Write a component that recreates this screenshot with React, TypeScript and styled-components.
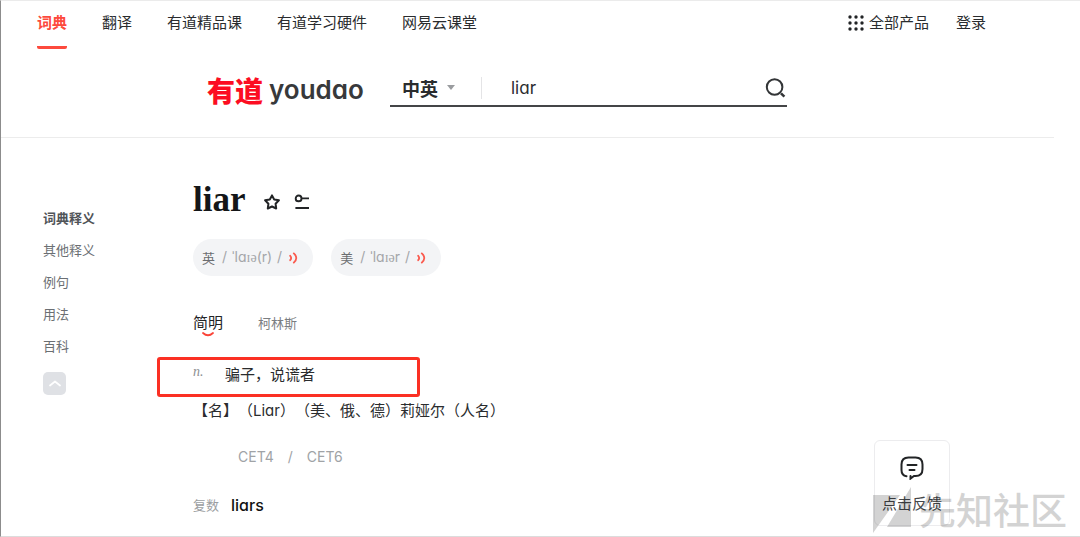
import React from "react";
import styled, { createGlobalStyle } from "styled-components";

const GlobalStyle = createGlobalStyle`
  *, *::before, *::after { box-sizing: border-box; }
  body {
    margin: 0;
    background: #fff;
    color: #2a2c2e;
    font-family: Inter, "Noto Sans CJK SC", sans-serif;
    font-feature-settings: "cv11";
    font-size: 15px;
    line-height: 22px;
    text-spacing-trim: space-all;
  }
  a { color: inherit; text-decoration: none; }
  button, input, select { font: inherit; font-feature-settings: inherit; color: inherit; border: 0; padding: 0; background: none; }
  button { cursor: pointer; }
`;

const Page = styled.div`
  position: relative;
  min-height: 100vh;
  border-left: 1px solid #8c8c8c;
  border-top: 1px solid #ebebeb;
  border-bottom: 1px solid #dcdcdc;
`;

const Header = styled.header`
  margin-right: 26px;
  padding: 11px 68px 30px 36px;
  border-bottom: 1px solid #ececec;
`;

const TopBar = styled.div`
  display: flex;
  justify-content: space-between;
  align-items: flex-start;
`;

const Nav = styled.nav`
  display: flex;
  gap: 35px;
`;

const NavLink = styled.a<{ $active?: boolean }>`
  height: 37px;
  color: ${(p) => (p.$active ? "#fd4a3d" : "#2a2c2e")};
  font-weight: ${(p) => (p.$active ? 700 : 400)};
  border-bottom: 3px solid ${(p) => (p.$active ? "#fd4a3d" : "transparent")};
  border-radius: 2px;
`;

const Account = styled.div`
  display: flex;
  gap: 27px;
`;

const AccountButton = styled.button`
  display: flex;
  align-items: center;
  gap: 5px;
`;

const SearchRow = styled.div`
  display: flex;
  align-items: center;
  gap: 28px;
  margin-top: 21px;
  padding-left: 170px;
`;

const Logo = styled.a`
  display: flex;
  align-items: center;
  gap: 6px;
  width: 155px;
  height: 37px;
  white-space: nowrap;
`;

const LogoMark = styled.span`
  padding-top: 2px;
  color: #fc0d22;
  font: 900 28px/38px "Noto Sans CJK SC", sans-serif;
`;

const LogoName = styled.span`
  padding-top: 2px;
  color: #38393b;
  font-size: 26px;
  font-weight: 600;
  line-height: 32px;
`;

const SearchBox = styled.form`
  display: flex;
  align-items: center;
  flex: 0 1 397px;
  min-width: 0;
  height: 37px;
  padding: 0 1px 0 12px;
  border-bottom: 2px solid #444547;
`;

const LanguageField = styled.div`
  display: flex;
  flex: none;
  align-items: center;
  gap: 8px;
  width: 79px;
`;

const LanguageSelect = styled.select`
  appearance: none;
  width: 37px;
  padding-top: 4px;
  font-size: 18px;
  font-weight: 700;
  line-height: 26px;
  outline: none;
`;

const SearchInput = styled.input`
  flex: 1;
  width: 0;
  min-width: 0;
  height: 22px;
  padding-left: 29px;
  border-left: 1px solid #e4e4e6;
  font-size: 17px;
  outline: none;
`;

const IconButton = styled.button`
  display: flex;
`;

const Main = styled.main`
  display: flex;
  padding-left: 42px;
`;

const Sidebar = styled.aside`
  display: flex;
  flex-direction: column;
  align-items: flex-start;
  width: 150px;
  padding-top: 64px;
`;

const SideLink = styled.a<{ $active?: boolean }>`
  color: ${(p) => (p.$active ? "#505458" : "#6b6f73")};
  font-size: 13px;
  font-weight: ${(p) => (p.$active ? 700 : 400)};
  line-height: 32px;
`;

const TopButton = styled.button`
  display: flex;
  align-items: center;
  justify-content: center;
  width: 23px;
  height: 23px;
  margin-top: 10px;
  border-radius: 5px;
  background: #dfe1e5;
`;

const Article = styled.article`
  flex: 1;
  padding-top: 42px;
`;

const WordLine = styled.div`
  display: flex;
  align-items: center;
  gap: 14px;
  height: 40px;
`;

const Word = styled.h1`
  margin: 0 5px 0 0;
  color: #141618;
  font: 700 35px/40px "Liberation Serif", serif;
`;

const WordTool = styled(IconButton)`
  padding-top: 4px;
`;

const Pronunciations = styled.div`
  display: flex;
  gap: 18px;
  margin-top: 19px;
`;

const Pill = styled.button`
  display: flex;
  align-items: center;
  gap: 7px;
  height: 37px;
  padding: 0 15px 0 9px;
  border-radius: 19px;
  background: #f3f4f6;
  color: #6b6d70;
  font-size: 13px;
`;

const Phonetic = styled.span`
  display: flex;
  gap: 5px;
  color: #a4a6a9;
  font-size: 14px;
`;

const Ipa = styled.span`
  font-family: "Liberation Serif", serif;
  font-size: 14px;
`;

const Tabs = styled.div`
  display: flex;
  gap: 35px;
  margin-top: 35px;
`;

const Tab = styled.button<{ $active?: boolean }>`
  display: flex;
  flex-direction: column;
  align-items: center;
  height: 30px;
  color: ${(p) => (p.$active ? "#222426" : "#7b7e82")};
  font-size: ${(p) => (p.$active ? 15 : 13)}px;
  line-height: 24px;
`;

const Smile = styled.svg`
  margin-top: -3px;
`;

const Definition = styled.div`
  position: relative;
  display: flex;
  margin-top: 22px;
  line-height: 24px;
`;

const Highlight = styled.div`
  position: absolute;
  top: -6px;
  left: -36px;
  width: 263px;
  height: 40px;
  border: 3px solid #fb3023;
  border-radius: 3px;
`;

const PartOfSpeech = styled.span`
  width: 32px;
  color: #8d9093;
  font: italic 14px/18px "Liberation Serif", serif;
`;

const NameEntry = styled.p`
  margin: 12px 0 0;
  line-height: 24px;
`;

const Exams = styled.div`
  display: flex;
  gap: 14px;
  margin-top: 23px;
  padding-left: 45px;
  color: #a0a3a6;
  font-size: 14px;
`;

const WordForm = styled.div`
  display: flex;
  align-items: center;
  gap: 12px;
  margin-top: 26px;
`;

const FormLabel = styled.span`
  color: #9b9ea1;
  font-size: 13px;
`;

const FormValue = styled.a`
  color: #111;
  font-size: 16px;
  font-weight: 500;
`;

const Feedback = styled.button`
  position: absolute;
  right: 130px;
  bottom: 10px;
  display: flex;
  flex-direction: column;
  align-items: center;
  gap: 13px;
  width: 76px;
  height: 86px;
  padding-top: 15px;
  border: 1px solid #ececee;
  border-radius: 6px;
  background: #fff;
  color: #44474a;
  white-space: nowrap;
`;

const Watermark = styled.div`
  position: absolute;
  right: 13px;
  bottom: 0;
  display: flex;
  align-items: flex-end;
  gap: 8px;
  color: #000;
  font-size: 37px;
  font-weight: 500;
  line-height: 48px;
  opacity: 0.17;
  pointer-events: none;

  svg { margin-bottom: 3px; }
`;

const SearchIcon = () => (
  <svg width="22" height="22" viewBox="0 0 22 22" fill="none" stroke="#333537" strokeWidth="2">
    <circle cx="10.6" cy="10" r="7.8" />
    <path d="M17 16.4l3.4 3.2" strokeWidth="2.6" />
  </svg>
);

const SoundIcon = () => (
  <svg width="9" height="12" viewBox="0 0 9 12" fill="none" stroke="#fa5a4e" strokeWidth="1.8" strokeLinecap="round">
    <path d="M1.2 3.8q1.9 2.2 0 4.4M4.8 1.4q5 4.6 0 9.2" />
  </svg>
);

const dots = [2, 8, 14];

export default function App() {
  return (
    <>
      <GlobalStyle />
      <Page>
        <Header>
          <TopBar>
            <Nav>
              <NavLink href="#dict" $active>词典</NavLink>
              <NavLink href="#translate">翻译</NavLink>
              <NavLink href="#course">有道精品课</NavLink>
              <NavLink href="#hardware">有道学习硬件</NavLink>
              <NavLink href="#study">网易云课堂</NavLink>
            </Nav>
            <Account>
              <AccountButton type="button">
                <svg width="16" height="16" viewBox="0 0 16 16" fill="#222426">
                  {dots.map((y) => dots.map((x) => <circle key={`${x}-${y}`} cx={x} cy={y} r="1.7" />))}
                </svg>
                全部产品
              </AccountButton>
              <AccountButton type="button">登录</AccountButton>
            </Account>
          </TopBar>
          <SearchRow>
            <Logo href="#home">
              <LogoMark>有道</LogoMark>
              <LogoName>youdao</LogoName>
            </Logo>
            <SearchBox onSubmit={(e) => e.preventDefault()}>
              <LanguageField>
                <LanguageSelect aria-label="语言" defaultValue="en">
                  <option value="en">中英</option>
                </LanguageSelect>
                <svg width="8" height="5" viewBox="0 0 8 5" fill="#9a9c9f"><path d="M0 0h8L4 5z" /></svg>
              </LanguageField>
              <SearchInput type="text" aria-label="搜索" defaultValue="liar" />
              <IconButton type="submit" aria-label="搜索"><SearchIcon /></IconButton>
            </SearchBox>
          </SearchRow>
        </Header>

        <Main>
          <Sidebar>
            <SideLink href="#dict-def" $active>词典释义</SideLink>
            <SideLink href="#other-def">其他释义</SideLink>
            <SideLink href="#examples">例句</SideLink>
            <SideLink href="#usage">用法</SideLink>
            <SideLink href="#wiki">百科</SideLink>
            <TopButton type="button" aria-label="返回顶部">
              <svg width="12" height="7" viewBox="0 0 12 7" fill="none" stroke="#fff" strokeWidth="1.7" strokeLinecap="round" strokeLinejoin="round">
                <path d="M1 5.5L6 1.5l5 4" />
              </svg>
            </TopButton>
          </Sidebar>

          <Article>
            <WordLine>
              <Word>liar</Word>
              <WordTool type="button" aria-label="收藏">
                <svg width="16" height="16" viewBox="0 0 16 16" fill="none" stroke="#222426" strokeWidth="2" strokeLinejoin="round">
                  <path d="M8 1.4l2.2 4 4.7.9-3.3 3.5.6 4.7L8 12.5l-4.2 2 .6-4.7L1.1 6.3l4.7-.9z" />
                </svg>
              </WordTool>
              <WordTool type="button" aria-label="笔记">
                <svg width="16" height="16" viewBox="0 0 16 16" fill="none" stroke="#222426" strokeWidth="1.9">
                  <circle cx="4.6" cy="4.4" r="2.9" />
                  <path d="M7.5 4.4H15M1.4 14H15" />
                </svg>
              </WordTool>
            </WordLine>

            <Pronunciations>
              <Pill type="button">
                英
                <Phonetic><span>/</span><span>ˈla<Ipa>ɪə</Ipa>(r)</span><span>/</span></Phonetic>
                <SoundIcon />
              </Pill>
              <Pill type="button">
                美
                <Phonetic><span>/</span><span>ˈla<Ipa>ɪə</Ipa>r</span><span>/</span></Phonetic>
                <SoundIcon />
              </Pill>
            </Pronunciations>

            <Tabs>
              <Tab type="button" $active>
                简明
                <Smile width="12" height="5" viewBox="0 0 12 5" fill="none" stroke="#fa4438" strokeWidth="1.8" strokeLinecap="round">
                  <path d="M1 1q5 4.6 10 0" />
                </Smile>
              </Tab>
              <Tab type="button">柯林斯</Tab>
            </Tabs>

            <Definition>
              <PartOfSpeech>n.</PartOfSpeech>
              <span>骗子，说谎者</span>
              <Highlight />
            </Definition>
            <NameEntry>【名】（Liar）（美、俄、德）莉娅尔（人名）</NameEntry>
            <Exams><span>CET4</span><span>/</span><span>CET6</span></Exams>
            <WordForm>
              <FormLabel>复数</FormLabel>
              <FormValue href="#liars">liars</FormValue>
            </WordForm>
          </Article>
        </Main>

        <Feedback type="button">
          <svg width="24" height="24" viewBox="0 0 24 24" fill="none" stroke="#222426" strokeWidth="2" strokeLinecap="round">
            <path d="M6.5 20.2Q1.5 19.5 1.5 14V8.5Q1.5 1.5 8.5 1.5h7q7 0 7 7V13q0 7-7 7h-1.5L10.5 22.6V20" />
            <path d="M7.5 9h9M9.5 14h5" />
          </svg>
          点击反馈
        </Feedback>
        <Watermark aria-hidden="true">
          <svg width="38" height="46" viewBox="0 0 38 46" fill="#000">
            <path d="M0 8h27L0 46zM38 0v40H14z" />
          </svg>
          先知社区
        </Watermark>
      </Page>
    </>
  );
}
